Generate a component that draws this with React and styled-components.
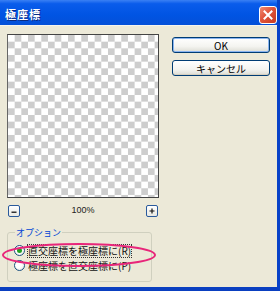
import React from 'react';
import styled, { createGlobalStyle } from 'styled-components';

const GlobalStyle = createGlobalStyle`
  html, body {
    margin: 0;
    padding: 0;
    background: #ece9d8;
  }
  body {
    font-family: "Noto Sans CJK JP", "Liberation Sans", sans-serif;
  }
`;

const Window = styled.div`
  width: 280px;
  height: 291px;
  box-sizing: border-box;
  display: flex;
  flex-direction: column;
  background: #ece9d8;
  border-right: 3px solid #0842c8;
  border-bottom: 4px solid #0a3fc0;
  overflow: hidden;
`;

const TitleBar = styled.div`
  height: 25px;
  flex-shrink: 0;
  display: flex;
  align-items: center;
  justify-content: space-between;
  padding: 0 0 0 5px;
  background: linear-gradient(180deg, #3a80f4 0%, #0a5ceb 15%, #0054e3 60%, #0450d8 100%);
  border-bottom: 1px solid #f6f4ec;
`;

const Title = styled.span`
  color: #fff;
  font-weight: bold;
  font-size: 11px;
  letter-spacing: 1px;
  margin-top: 2px;
  text-shadow: 1px 1px 0 #0a2a80;
`;

const CloseButton = styled.div`
  width: 18px;
  height: 18px;
  margin-top: 4px;
  box-sizing: border-box;
  border: 1px solid #fff;
  border-radius: 3px;
  background: linear-gradient(135deg, #f08a72 0%, #e0543a 45%, #c63b22 100%);
  display: flex;
  align-items: center;
  justify-content: center;
`;

const Body = styled.div`
  flex: 1;
  display: flex;
  padding: 8px 0 0 7px;
  gap: 13px;
`;

const LeftColumn = styled.div`
  width: 152px;
  display: flex;
  flex-direction: column;
`;

const Preview = styled.div`
  width: 152px;
  height: 164px;
  box-sizing: border-box;
  border: 1px solid #444;
  border-left-color: #666;
  background: conic-gradient(#cdcdcd 25%, #fff 0 50%, #cdcdcd 0 75%, #fff 0);
  background-size: 13.34px 13.34px;
`;

const ZoomRow = styled.div`
  display: flex;
  align-items: center;
  justify-content: space-between;
  padding: 7px 1px 0 1px;
`;

const ZoomButton = styled.div`
  width: 12px;
  height: 12px;
  box-sizing: border-box;
  border: 1px solid #2a5a9c;
  border-radius: 2px;
  background: linear-gradient(180deg, #ffffff, #e8e8e2);
  display: flex;
  align-items: center;
  justify-content: center;
`;

const ZoomValue = styled.span`
  font-family: "Liberation Sans", sans-serif;
  font-size: 9px;
  color: #222;
  margin-top: -2px;
`;

const GroupBox = styled.fieldset`
  position: relative;
  margin: 10px 0 0 0;
  width: 145px;
  height: 55px;
  box-sizing: border-box;
  padding: 5px 0 0 6px;
  border: 1px solid #d0d0bf;
  border-radius: 3px;
`;

const Legend = styled.legend`
  padding: 0 1px;
  margin-left: 1px;
  font-size: 9px;
  line-height: 11px;
  color: #0046d5;
`;

const RadioRow = styled.label`
  display: flex;
  align-items: center;
  gap: 3px;
  height: 15px;
  font-size: 10px;
  color: #111;
  white-space: nowrap;
`;

const RadioCircle = styled.span`
  width: 11px;
  height: 11px;
  box-sizing: border-box;
  border-radius: 50%;
  border: 1px solid #1c5180;
  background: radial-gradient(circle at 40% 40%, #ffffff 40%, #dcdcd4 100%);
  display: flex;
  align-items: center;
  justify-content: center;

  &::after {
    content: '';
    width: 5px;
    height: 5px;
    border-radius: 50%;
    background: ${(p) => (p.$checked ? '#21a121' : 'transparent')};
  }
`;

const RadioText = styled.span`
  outline: ${(p) => (p.$focused ? '1px dotted #333' : 'none')};
  line-height: 12px;
`;

const Highlight = styled.svg`
  position: absolute;
  left: -7px;
  top: 4px;
  pointer-events: none;
`;

const RightColumn = styled.div`
  display: flex;
  flex-direction: column;
  gap: 7px;
  padding-top: 3px;
`;

const Button = styled.div`
  width: 98px;
  height: 16px;
  box-sizing: border-box;
  border: 1px solid #003c74;
  border-radius: 3px;
  background: linear-gradient(180deg, #ffffff 0%, #f4f4f0 60%, #dcdcd4 100%);
  box-shadow: ${(p) => (p.$default ? 'inset 0 0 0 1px #8ab4f0' : 'inset 0 -1px 0 #d6d0c0')};
  display: flex;
  align-items: center;
  justify-content: center;
  font-size: 10px;
  color: #000;
`;

const options = [
  { label: '直交座標を極座標に', key: 'R', checked: true },
  { label: '極座標を直交座標に', key: 'P', checked: false },
];

export default function App() {
  return (
    <>
      <GlobalStyle />
      <Window>
        <TitleBar>
          <Title>極座標</Title>
          <CloseButton>
            <svg width="10" height="10" viewBox="0 0 10 10">
              <path d="M1.5 1.5 L8.5 8.5 M8.5 1.5 L1.5 8.5" stroke="#fff" strokeWidth="2" strokeLinecap="square" />
            </svg>
          </CloseButton>
        </TitleBar>
        <Body>
          <LeftColumn>
            <Preview />
            <ZoomRow>
              <ZoomButton>
                <svg width="8" height="8" viewBox="0 0 8 8">
                  <rect x="1.5" y="4.5" width="5" height="1.5" fill="#333" />
                </svg>
              </ZoomButton>
              <ZoomValue>100%</ZoomValue>
              <ZoomButton>
                <svg width="8" height="8" viewBox="0 0 8 8">
                  <path d="M4 1.5 V6.5 M1.5 4 H6.5" stroke="#111" strokeWidth="1.2" />
                </svg>
              </ZoomButton>
            </ZoomRow>
            <GroupBox>
              <Legend>オプション</Legend>
              {options.map((o) => (
                <RadioRow key={o.key}>
                  <RadioCircle $checked={o.checked} />
                  <RadioText $focused={o.checked}>
                    {o.label}({o.key})
                  </RadioText>
                </RadioRow>
              ))}
              <Highlight width="158" height="26" viewBox="0 0 158 26">
                <ellipse cx="78" cy="13" rx="76" ry="11" fill="none" stroke="#e8267a" strokeWidth="2" />
              </Highlight>
            </GroupBox>
          </LeftColumn>
          <RightColumn>
            <Button $default>OK</Button>
            <Button>キャンセル</Button>
          </RightColumn>
        </Body>
      </Window>
    </>
  );
}
